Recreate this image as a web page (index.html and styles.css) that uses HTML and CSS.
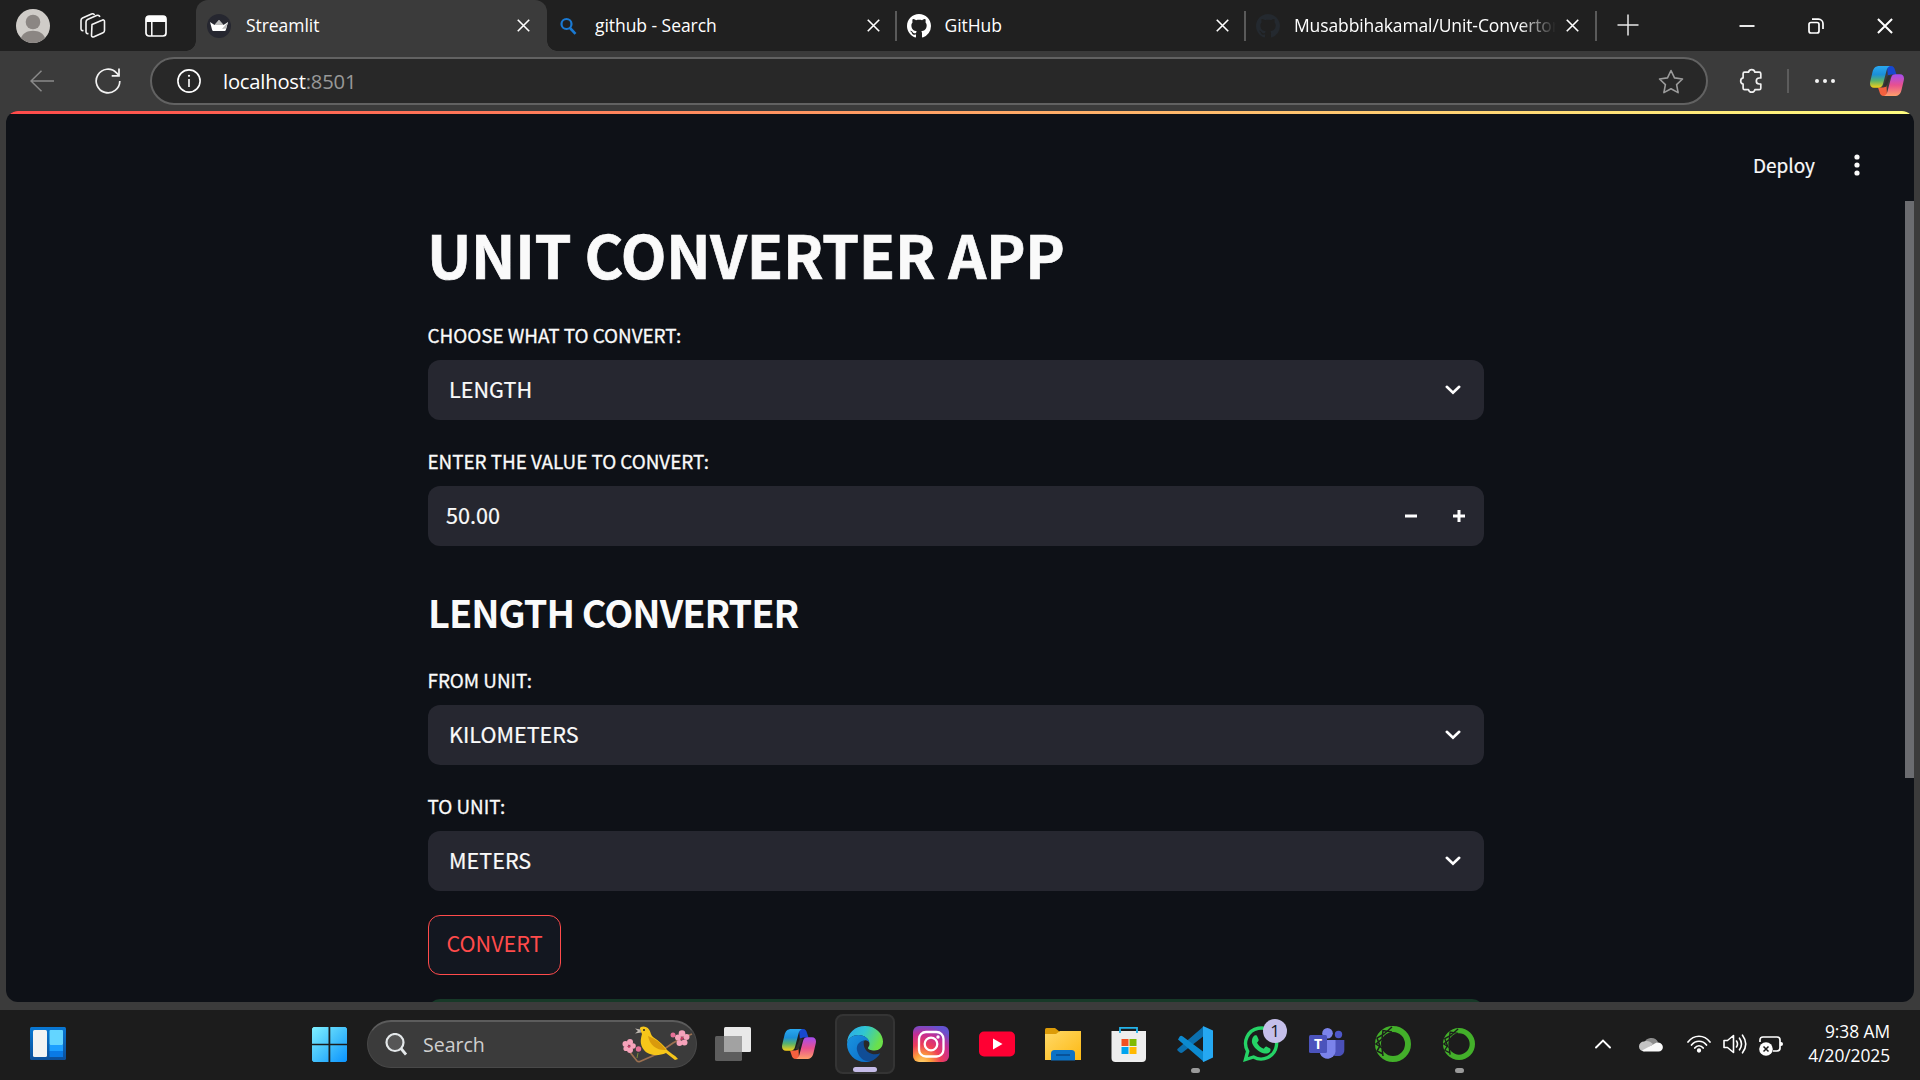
FILE: index.html
```html
<!DOCTYPE html>
<html lang="en">
<head>
<meta charset="utf-8">
<title>Streamlit</title>
<link rel="stylesheet" href="styles.css">
</head>
<body>
<svg class="defs" width="0" height="0" aria-hidden="true">
  <defs>
    <linearGradient id="cpBlue" x1="0" y1="0" x2="0" y2="1"><stop offset="0" stop-color="#2aa8f0"/><stop offset=".4" stop-color="#1b8fd8"/><stop offset=".68" stop-color="#59b26c"/><stop offset="1" stop-color="#f5cf16"/></linearGradient>
    <linearGradient id="cpPink" x1="0" y1="0" x2="0" y2="1"><stop offset="0" stop-color="#a44df0"/><stop offset=".5" stop-color="#e8508f"/><stop offset="1" stop-color="#ffa06a"/></linearGradient>
    <symbol id="copilot" viewBox="0 0 34 30">
      <path d="M17 0h4c2.500 0 3.500 2 4 4l1.500 4.500h-5c-2 0-3 1-3.500 3z" fill="#1748d0"/>
      <path d="M8 21.500h5c2 0 3-1 3.500-3L17 30h-3c-3 0-4-2-4.500-4z" fill="#f4603e"/>
      <path d="M9.500 0H20c-2 .8-2.800 2.500-3.300 4l-3.700 14c-.8 2.700-2 3.700-4.500 3.700H4c-3.300 0-4.500-2.500-3.800-6L2.500 6C3.500 2 5.500 0 9.500 0z" fill="url(#cpBlue)"/>
      <path d="M24.500 30H14c2-.8 2.800-2.500 3.300-4L21 12c.8-2.700 2-3.700 4.500-3.700H30c3.300 0 4.500 2.500 3.800 6L31.500 24c-1 4-3 6-7 6z" fill="url(#cpPink)"/>
      <path d="M19.500 9.500L14.800 20.500" stroke="#303030" stroke-width="2.800"/>
    </symbol>
    <symbol id="close" viewBox="0 0 12 12"><path d="M.7.7l10.600 10.600M11.300.7L.7 11.300" stroke="currentColor" stroke-width="1.500" fill="none"/></symbol>
    <symbol id="github" viewBox="0 0 16 16"><path fill="currentColor" d="M8 0C3.580 0 0 3.580 0 8c0 3.540 2.290 6.530 5.470 7.590.4.070.55-.17.55-.38 0-.19-.01-.82-.01-1.490-2.010.37-2.530-.49-2.690-.94-.09-.23-.48-.94-.82-1.130-.28-.15-.68-.52-.01-.53.63-.01 1.080.58 1.230.82.72 1.210 1.870.87 2.330.66.070-.52.28-.87.51-1.070-1.780-.2-3.640-.89-3.640-3.950 0-.87.31-1.590.82-2.150-.08-.2-.36-1.020.08-2.120 0 0 .67-.21 2.200.82.64-.18 1.320-.27 2-.27s1.360.09 2 .27c1.530-1.040 2.200-.82 2.200-.82.44 1.100.16 1.920.08 2.120.51.56.82 1.270.82 2.150 0 3.070-1.870 3.750-3.650 3.950.29.25.54.73.54 1.480 0 1.070-.01 1.930-.01 2.200 0 .21.150.46.55.38A8.010 8.010 0 0 0 16 8c0-4.420-3.580-8-8-8z"/></symbol>
    <symbol id="chevron" viewBox="0 0 16 10"><path d="M1.800 1.800L8 7.800l6.200-6" fill="none" stroke="#fff" stroke-width="2.600" stroke-linecap="round"/></symbol>
    <symbol id="ring" viewBox="0 0 36 36">
      <circle cx="18" cy="18" r="15" fill="none" stroke="#43b02a" stroke-width="6"/>
      <path d="M17 1L9 8 2 12l3 8-3 5 6 3M17 6L8 4.500 7 13l-6 5 6 4 1 8" fill="none" stroke="#1c1c1c" stroke-width="1.500"/>
    </symbol>
  </defs>
</svg>

<header class="tabstrip">
  <svg class="avatar" viewBox="0 0 34 34"><circle cx="17" cy="17" r="17" fill="#cfccc8"/><circle cx="17" cy="13" r="7.300" fill="#8b8683"/><path d="M5 29C6.500 24.500 11 21.700 17 21.700S27.500 24.500 29 29a17 17 0 0 1-24 0z" fill="#8b8683"/></svg>
  <svg class="workspaces" viewBox="0 0 26 25" fill="none" stroke="#f4f4f4" stroke-width="1.600" stroke-linejoin="round"><path d="M12 11.500l10-4.300c1.500-.7 2.500 0 2.500 1.300v9c0 1-.5 1.800-1.500 2.200l-9 4c-1.300.6-2.500 0-2.500-1.300z"/><path d="M8.500 20.500c-2 .5-2.500-.5-2.500-2V9c0-1.300.5-2 1.500-2.500l9-4c1.500-.6 3-.2 3.300 1.500"/><path d="M3.500 17.500C1.500 18 1 17 1 15.500V7.500C1 6.200 1.500 5.500 2.500 5l9-4c1.500-.5 2.500 0 3 1"/></svg>
  <svg class="vtabs" viewBox="0 0 22 22"><rect x="1" y="1" width="20" height="20" rx="3" fill="none" stroke="#fff" stroke-width="1.700"/><path d="M1 7V4a3 3 0 0 1 3-3h14a3 3 0 0 1 3 3v3z" fill="#fff"/><path d="M6.800 7v14" stroke="#fff" stroke-width="1.500"/></svg>

  <div class="tab tab-active">
    <svg class="favicon" viewBox="0 0 24 24"><circle cx="12" cy="12" r="12" fill="#262730"/><path d="M3 8l4.500 3L12 6l4.500 5L21 8l-2 7.500c-.3 1-.8 1.500-2 1.500H7c-1.200 0-1.700-.5-2-1.500z" fill="#fff"/><path d="M12 6l4.500 5-9 0zM21 8l-6 7 4-.5z" fill="#bbb"/></svg>
    <span class="tab-title">Streamlit</span>
    <svg class="tab-close"><use href="#close"/></svg>
  </div>
  <div class="tab">
    <svg class="favicon favicon-search" viewBox="0 0 24 24" fill="none" stroke="#1a7ad4" stroke-width="2.200"><circle cx="9.500" cy="10" r="5"/><path d="M13 14l5.500 5.800" stroke-width="2.600"/></svg>
    <span class="tab-title">github - Search</span>
    <svg class="tab-close"><use href="#close"/></svg>
  </div>
  <div class="tab tab-divided">
    <svg class="favicon"><use href="#github"/></svg>
    <span class="tab-title">GitHub</span>
    <svg class="tab-close"><use href="#close"/></svg>
  </div>
  <div class="tab tab-divided">
    <svg class="favicon favicon-dim"><use href="#github"/></svg>
    <span class="tab-title tab-title-fade">Musabbihakamal/Unit-Convertor</span>
    <svg class="tab-close"><use href="#close"/></svg>
  </div>
  <div class="newtab"><svg width="22" height="22" viewBox="0 0 22 22"><path d="M11 .5v21M.5 11h21" stroke="#e8e8e8" stroke-width="1.500"/></svg></div>
  <div class="window-controls">
    <svg width="16" height="16" viewBox="0 0 16 16"><path d="M.5 8h15" stroke="#fff" stroke-width="1.800"/></svg>
    <svg width="16" height="16" viewBox="0 0 16 16" fill="none" stroke="#fff" stroke-width="1.700"><rect x="1" y="4.500" width="10" height="10.500" rx="2"/><path d="M4 1.200h6.500a4.500 4.500 0 0 1 4.500 4.500V11"/></svg>
    <svg width="16" height="16"><use href="#close"/></svg>
  </div>
</header>

<nav class="toolbar">
  <svg class="back" viewBox="0 0 24 22" fill="none" stroke="#8a8a8a" stroke-width="1.500"><path d="M24 11H1M11.500.8L1 11l10.500 10.200"/></svg>
  <svg class="reload" viewBox="0 0 26 26" fill="none" stroke="#f2f2f2" stroke-width="1.700"><path d="M24.800 13A11.800 11.800 0 1 1 21.500 4.800L24 7.500"/><path d="M24 .5v7.300h-7.300"/></svg>
  <div class="address">
    <svg class="info" viewBox="0 0 24 24"><circle cx="12" cy="12" r="11.100" fill="none" stroke="#fff" stroke-width="1.600"/><path d="M12 10v8" stroke="#fff" stroke-width="1.600"/><circle cx="12" cy="6.800" r="1.100" fill="#fff"/></svg>
    <span class="url">localhost<span class="port">:8501</span></span>
    <svg class="star" viewBox="0 0 26 25" fill="none" stroke="#9b9b9b" stroke-width="1.600" stroke-linejoin="round"><path d="M13 1.500l3.500 7.400 8 1.100-5.900 5.600 1.500 8L13 19.700l-7.100 3.900 1.500-8L1.500 10l8-1.100z"/></svg>
  </div>
  <svg class="puzzle" viewBox="0 0 24 26" fill="none" stroke="#f0f0f0" stroke-width="1.700" stroke-linejoin="round"><path d="M9.500 4.200a3.300 3.300 0 0 1 6.400 0h4.300c1 0 1.600.5 1.600 1.500v4.300h-1.500a3 3 0 0 0 0 6h1.500v4.200c0 1-.6 1.500-1.600 1.500h-4.300a3.300 3.300 0 0 1-6.400 0H5.600c-1 0-1.500-.5-1.500-1.500v-4.100a3.200 3.200 0 0 1 0-6.200V5.700c0-1 .5-1.500 1.500-1.500z"/></svg>
  <span class="toolbar-sep"></span>
  <svg class="more" viewBox="0 0 22 6" fill="#f4f4f4"><circle cx="3" cy="3" r="2"/><circle cx="11" cy="3" r="2"/><circle cx="19" cy="3" r="2"/></svg>
  <svg class="copilot-btn"><use href="#copilot"/></svg>
</nav>

<main class="page">
  <div class="decoration"></div>
  <div class="app-header">
    <span class="deploy">Deploy</span>
    <svg width="6" height="22" viewBox="0 0 6 22" fill="#fafafa"><circle cx="3" cy="3" r="2.600"/><circle cx="3" cy="11" r="2.600"/><circle cx="3" cy="19" r="2.600"/></svg>
  </div>
  <div class="app-scroll">
    <div class="block">
      <h1>UNIT CONVERTER APP</h1>
      <div class="field">
        <label>CHOOSE WHAT TO CONVERT:</label>
        <div class="control"><span>LENGTH</span><svg class="chev"><use href="#chevron"/></svg></div>
      </div>
      <div class="field">
        <label>ENTER THE VALUE TO CONVERT:</label>
        <div class="control control-number"><span>50.00</span>
          <svg width="12" height="12" viewBox="0 0 12 12"><path d="M0 6h12" stroke="#fff" stroke-width="3"/></svg>
          <svg width="12" height="12" viewBox="0 0 12 12"><path d="M0 6h12M6 0v12" stroke="#fff" stroke-width="3"/></svg>
        </div>
      </div>
      <h2>LENGTH CONVERTER</h2>
      <div class="field">
        <label>FROM UNIT:</label>
        <div class="control"><span>KILOMETERS</span><svg class="chev"><use href="#chevron"/></svg></div>
      </div>
      <div class="field">
        <label>TO UNIT:</label>
        <div class="control"><span>METERS</span><svg class="chev"><use href="#chevron"/></svg></div>
      </div>
      <button class="convert">CONVERT</button>
      <div class="success"></div>
    </div>
    <div class="scrollbar"></div>
  </div>
</main>

<footer class="taskbar">
  <svg class="widgets" viewBox="0 0 36 33"><defs><linearGradient id="wg" x1="0" y1="0" x2="0" y2="1"><stop offset="0" stop-color="#0878d4"/><stop offset="1" stop-color="#0c4f9a"/></linearGradient></defs><rect width="36" height="33" rx="1.500" fill="url(#wg)"/><rect x="3" y="3" width="14" height="27" rx="1.500" fill="#f3f3f3"/><rect x="19.500" y="3" width="13.500" height="15" rx="1" fill="#63d5ff"/><rect x="19.500" y="18" width="13.500" height="6" fill="#1c9fff"/><rect x="19.500" y="24" width="13.500" height="6" fill="#0a7ae6"/></svg>
  <svg class="start" viewBox="0 0 35 35"><defs><linearGradient id="wn" x1="0" y1="0" x2="1" y2="1"><stop offset="0" stop-color="#7ff0ff"/><stop offset=".5" stop-color="#45c2fb"/><stop offset="1" stop-color="#0a93ff"/></linearGradient></defs><path d="M1.500 0h15v16.700H0V1.500zM18.300 0h15.200L35 1.500v15.200H18.300zM0 18.300h16.500V35h-15L0 33.500zM18.300 18.300H35v15.200L33.500 35H18.300z" fill="url(#wn)"/></svg>
  <div class="search">
    <svg class="lens" viewBox="0 0 22 23" fill="none" stroke="#e4e8ea" stroke-width="2.200"><circle cx="10" cy="9.500" r="8.500" fill="#565656"/><path d="M16 15.500l5 6" stroke-width="2.800"/></svg>
    <span>Search</span>
    <svg class="bird" viewBox="0 0 72 38">
      <path d="M8 25l8 10q1 1 3 .5L36 28l16-11 9-5 10-4" fill="none" stroke="#9c7050" stroke-width="1.700"/>
      <path d="M17 27l-1 5" fill="none" stroke="#7b8a3c" stroke-width="1"/>
      <path d="M19 3c-1-2.500 6-4 9 .5 2 3 1.500 5 4 7.500 6 4 11 8 14 13 3 3 8 5 11 9l-3 1-9-7c-9 4-18 2-22-3-5-6-3-12-2-16-.8-2-1.500-3-2-5z" fill="#f6c61a"/>
      <path d="M27 10c8 3 13 7 18 14-9 .5-16-4-18-14z" fill="#d99a0c"/>
      <path d="M19.500 3.500L14 2.500l3 2.500-3 2.500 6-1z" fill="#bdb7b0"/><circle cx="23" cy="4" r="1" fill="#222"/>
      <g fill="#f6a3bb"><circle cx="4.500" cy="18" r="3"/><circle cx="9" cy="16" r="3"/><circle cx="12" cy="20" r="2.800"/><circle cx="9" cy="24" r="3"/><circle cx="5" cy="22.500" r="2.600"/><circle cx="57" cy="11.500" r="3"/><circle cx="61" cy="7.500" r="3.300"/><circle cx="65.500" cy="11" r="3"/><circle cx="63.500" cy="16.500" r="3"/><circle cx="58.500" cy="17" r="3"/></g>
      <g fill="#e66f96"><circle cx="17.500" cy="23" r="2.700"/><circle cx="52" cy="9" r="2.500"/></g>
      <g fill="#c63c68"><circle cx="8" cy="20.500" r="1.200"/><circle cx="61" cy="12.500" r="1.400"/></g>
    </svg>
  </div>
  <div class="apps">
    <div class="app"><svg viewBox="0 0 36 36"><rect y="10" width="27" height="25" rx="1.500" fill="#5d5d5d"/><rect x="9" y="1" width="27" height="25" rx="1.500" fill="#e9e9e9"/><path d="M9 10h18v16H9z" fill="#a2a2a2"/></svg></div>
    <div class="app"><svg class="app-copilot"><use href="#copilot"/></svg></div>
    <div class="app app-current"><svg viewBox="0 0 36 36"><defs><linearGradient id="eg" x1="0" y1="0" x2="1" y2=".35"><stop offset="0" stop-color="#2aa5ee"/><stop offset=".5" stop-color="#30c6d2"/><stop offset="1" stop-color="#6be04a"/></linearGradient><linearGradient id="eb" x1="0" y1="0" x2="1" y2="1"><stop offset="0" stop-color="#1a94e0"/><stop offset="1" stop-color="#0a6cc8"/></linearGradient></defs><path d="M0 18C0 7 8 0 18 0c11 0 18 8 18 15.500 0 6-4 9-8.500 9-4 0-6.500-1.200-6.500-2.500 0-1 1.500-1.800 1.500-4 0-5-5-9-11-9C6 9 1 12 0 18z" fill="url(#eg)"/><path d="M0 18C1 12 6 9 11.500 9c6 0 11 4 11 8-1-2-3-3-5-2.500-4.500 1-6.500 6-3.500 12 2 4 5 6.500 9 9-2 .5-3.500.5-5 .5C8 36 0 28 0 18z" fill="url(#eb)"/><path d="M17 14.500c-6 1-8.500 6-6.500 11.500 2 6 7 10 12.500 9.500 4.500-1.200 8-4.500 10.300-8.300-3 1.300-6 1.300-8.800.5-5-1.500-9-6.500-7.500-13.200z" fill="#104d96"/></svg><i class="ind ind-wide"></i></div>
    <div class="app"><svg viewBox="0 0 36 36"><defs><radialGradient id="ig" cx=".25" cy="1.050" r="1.100"><stop offset="0" stop-color="#ffd776"/><stop offset=".22" stop-color="#fca23c"/><stop offset=".48" stop-color="#ee3e58"/><stop offset=".75" stop-color="#c72d92"/><stop offset="1" stop-color="#6552d0"/></radialGradient></defs><rect width="36" height="36" rx="6" fill="url(#ig)"/><g fill="none" stroke="#fff" stroke-width="2.300"><rect x="6" y="6" width="24.500" height="24.500" rx="7"/><circle cx="18" cy="18" r="6.300"/></g><circle cx="25" cy="11" r="1.700" fill="#fff"/></svg></div>
    <div class="app"><svg viewBox="0 0 36 36"><rect y="5.500" width="36" height="25" rx="5" fill="#ff0033"/><path d="M14 12.500v11l9.500-5.500z" fill="#fff"/></svg></div>
    <div class="app"><svg viewBox="0 0 36 36"><defs><linearGradient id="fg" x1="0" y1="0" x2="1" y2="1"><stop offset="0" stop-color="#ffd968"/><stop offset="1" stop-color="#fdb913"/></linearGradient></defs><path d="M0 3.500Q0 2 1.500 2H10l5 4v4H0z" fill="#dc9b08"/><path d="M0 8h11l4-3h21v29H0z" fill="url(#fg)"/><path d="M6 34.500v-7q0-3.500 3.500-3.500h17q3.500 0 3.500 3.500v7z" fill="#0c72c6"/><path d="M11 29h14" stroke="#084b8f" stroke-width="1.600"/></svg></div>
    <div class="app"><svg viewBox="0 0 36 36"><path d="M9 7V1.800h17V7" fill="none" stroke="#24b4ea" stroke-width="1.800"/><path d="M.5 5H35v27q0 4-4 4H4.500q-4 0-4-4z" fill="#eee"/><path d="M9 7V5M26 7V5" stroke="#24b4ea" stroke-width="1.800"/><path d="M10.500 13h7v7h-7z" fill="#f25022"/><path d="M18.500 13h7v7h-7z" fill="#7fba00"/><path d="M10.500 21h7v7h-7z" fill="#00a4ef"/><path d="M18.500 21h7v7h-7z" fill="#ffb900"/></svg></div>
    <div class="app"><svg viewBox="0 0 36 36"><path d="M1 22.500l25.500-22L28 9 5.500 26.500q-1.500 1-3-.3L.8 24.800q-1.200-1.300.2-2.300z" fill="#0b6fae"/><path d="M1 13.500l1.700-3q1.300-1.300 2.800-.2L28 27l-1.500 8.500L1 13.500q-1-1.500 0 0z" fill="#0c8ad0"/><path d="M26.500.2L36 4.500v27L26.500 35.900q-1 .2-.5-2V2q-.5-2 .5-1.800z" fill="#25a8f2"/></svg><i class="ind"></i></div>
    <div class="app"><svg viewBox="0 0 36 36"><path d="M2.500 33.500l2.200-8.200A15.500 15.500 0 1 1 10.500 31z" fill="none" stroke="#25d366" stroke-width="3.400"/><path d="M11.500 9.500c1.500-.5 2.300-.3 2.800 1l1.300 3c.3 1-.1 1.600-1.600 3.200 1.600 3 3.700 4.700 6.800 6 1.500-1.900 2-2.500 3-2l3.300 1.700c.8.500.6 2.500-.4 3.600-1.500 1.700-4 2-6.500 1.200-5.500-1.800-9.500-6-11-10-.9-3 .6-6.700 2.300-7.700z" fill="#25d366"/></svg><b class="badge">1</b></div>
    <div class="app"><svg viewBox="0 0 36 36"><circle cx="29.500" cy="8.500" r="3.700" fill="#4e57c9"/><path d="M24 14h11.300v10c0 4-3 6-6 6h-4z" fill="#4a50b8"/><circle cx="18.500" cy="7.300" r="5.300" fill="#7b83eb"/><path d="M11 14h15.500v11.500a8 8 0 0 1-15.500 2z" fill="#7b83eb"/><rect y="9" width="18" height="18" rx="1.500" fill="#4b53bc"/><text x="9" y="22.700" text-anchor="middle" class="teams-t">T</text></svg></div>
    <div class="app"><svg><use href="#ring"/></svg></div>
    <div class="app"><svg class="ring-small"><use href="#ring"/></svg><i class="ind"></i></div>
  </div>
  <div class="tray">
    <svg class="t-up" viewBox="0 0 16 10"><path d="M1 8.500L8 1.500l7 7" fill="none" stroke="#fff" stroke-width="1.900" stroke-linecap="round"/></svg>
    <svg class="t-cloud" viewBox="0 0 24 16"><path d="M5 8a7.500 7.500 0 0 1 14 -2l-4 4z" fill="#8d8d8d"/><path d="M5 15.500a5 5 0 0 1 0-10c4-1 6 0 9 2.500l-9 7.500z" fill="#c4c4c4"/><path d="M3 14.500L15 8c2-2 7-2.500 8.500 1.500 1.200 3-.8 6-4 6H5z" fill="#fafafa"/></svg>
    <svg class="t-wifi" viewBox="0 0 24 18" fill="none" stroke="#fff" stroke-width="1.700" stroke-linecap="round"><path d="M1 7C7-.7 17-.7 23 7M4.500 10c4-5 11-5 15 0M7.800 13c2.200-3 6.200-3 8.400 0"/><circle cx="12" cy="15.500" r="1.300" fill="#fff"/></svg>
    <svg class="t-sound" viewBox="0 0 24 20" fill="none" stroke="#fff" stroke-width="1.600" stroke-linecap="round" stroke-linejoin="round"><path d="M1 6.500h3.500L10.500 1.500v17L4.500 13.500H1z"/><path d="M13.500 7q2 3 0 6M16.500 4.200q4 5.800 0 11.600M19.500 1.200q6.500 8.800 0 17.600"/></svg>
    <svg class="t-battery" viewBox="0 0 24 20"><path d="M1 6V4q0-3 3-3h14q3 0 3 3v8q0 3-3 3h-4" fill="none" stroke="#fff" stroke-width="1.700"/><path d="M21 6h1q2 0 2 2t-2 2h-1z" fill="#fff"/><circle cx="7" cy="13" r="6.800" fill="#fff"/><path d="M4.500 10.500l5 5M9.500 10.500l-5 5" stroke="#1c1c1c" stroke-width="1.500"/></svg>
    <div class="clock"><span class="time">9:38 AM</span><span class="date">4/20/2025</span></div>
  </div>
</footer>
</body>
</html>
```
FILE: styles.css
```css
* { box-sizing: border-box; }
body {
  margin: 0;
  width: 1920px;
  height: 1080px;
  overflow: hidden;
  display: flex;
  flex-direction: column;
  background: #3b3b3b;
  color: #fff;
  font-family: "Open Sans", "Noto Sans", sans-serif;
}
svg { display: block; flex: none; }
.defs { position: absolute; }

/* Tab strip */
.tabstrip {
  height: 51px;
  flex: none;
  display: flex;
  align-items: center;
  background: #202020;
  padding-left: 16px;
}
.avatar { width: 34px; height: 34px; }
.workspaces { width: 26px; height: 25px; margin-left: 30px; }
.vtabs { width: 22px; height: 22px; margin: 0 29px 0 39px; }
.tab {
  width: 349.500px;
  height: 51px;
  display: flex;
  align-items: center;
  padding: 0 17px 0 10px;
  position: relative;
}
.tab-active { background: #3b3b3b; border-radius: 12px 12px 0 0; width: 351px; }
.tab-active::before, .tab-active::after {
  content: "";
  position: absolute;
  bottom: 0;
  width: 10px;
  height: 10px;
}
.tab-active::before { left: -10px; background: radial-gradient(circle at 0 0, #202020 9.500px, #3b3b3b 10px); }
.tab-active::after { right: -10px; background: radial-gradient(circle at 100% 0, #202020 9.500px, #3b3b3b 10px); }
.tab-divided::before {
  content: "";
  position: absolute;
  left: -2px;
  top: 11px;
  width: 2px;
  height: 30px;
  background: #5a5a5a;
}
.favicon { width: 24px; height: 24px; margin-right: 14px; }
.tab-active .favicon { margin-left: 1px; margin-right: 15px; }
.favicon-dim { color: #24292f; }
.tab-title { flex: 1; font-size: 17.500px; letter-spacing: -0.05px; white-space: nowrap; overflow: hidden; line-height: 28px; margin-top: -1px; }
.tab-title-fade { letter-spacing: -0.12px; -webkit-mask-image: linear-gradient(90deg, #000 225px, transparent 262px); mask-image: linear-gradient(90deg, #000 225px, transparent 262px); }
.tab-close { width: 13px; height: 13px; margin-left: 6px; }
.newtab { width: 68px; height: 30px; margin-left: -1px; border-left: 2px solid #5a5a5a; display: flex; align-items: center; padding-left: 20px; }
.newtab svg { margin-top: -2px; }
.window-controls { display: flex; gap: 53px; margin-left: auto; padding-right: 27px; }

/* Toolbar */
.toolbar {
  height: 60px;
  flex: none;
  display: flex;
  align-items: center;
  padding: 0 16px 0 30px;
}
.back { width: 24px; height: 22px; }
.reload { width: 26px; height: 26px; margin: 0 29px 0 41px; }
.address {
  width: 1558px;
  height: 48px;
  display: flex;
  align-items: center;
  border: 2px solid #626262;
  border-radius: 24px;
  background: #282828;
  padding: 0 22px 0 25px;
}
.info { width: 24px; height: 24px; }
.url { flex: 1; margin-left: 22px; font-size: 20.200px; letter-spacing: -0.2px; }
.port { color: #989898; }
.star { width: 26px; height: 25px; }
.puzzle { width: 24px; height: 26px; margin-left: 31px; }
.toolbar-sep { width: 2px; height: 24px; background: #5c5c5c; margin: 0 25px 0 24px; }
.more { width: 22px; height: 6px; }
.copilot-btn { width: 34px; height: 30px; margin-left: auto; }

/* App page */
.page {
  width: 1908px;
  height: 891px;
  flex: none;
  margin-left: 6px;
  border-radius: 12px;
  overflow: hidden;
  background: #0e1117;
  color: #fafafa;
  display: flex;
  flex-direction: column;
  font-family: "Noto Sans CJK JP", "Noto Sans CJK SC", sans-serif;
}
.decoration { height: 3px; flex: none; background: linear-gradient(90deg, #ff4b4b, #fffd80); }
.app-header {
  height: 87px;
  flex: none;
  display: flex;
  align-items: center;
  justify-content: flex-end;
  gap: 39px;
  padding: 14px 54px 0 0;
}
.deploy { font-size: 19px; line-height: 30px; -webkit-text-stroke: 0.2px currentColor; }
.app-scroll { flex: 1; display: flex; min-height: 0; position: relative; }
.block {
  width: 1056px;
  margin-left: 422px;
  display: flex;
  flex-direction: column;
}
.block > * { flex: none; }
h1, h2 { margin: 0; font-weight: 700; white-space: nowrap; }
h1 { font-size: 59.400px; line-height: 80px; height: 80px; margin: 12px 0 31px -1px; letter-spacing: -0.33px; -webkit-text-stroke: 0.7px currentColor; }
.field { margin-bottom: 30px; }
label { display: block; height: 39px; margin-top: -3px; margin-left: -0.500px; font-size: 18.900px; line-height: 27px; letter-spacing: -0.04px; -webkit-text-stroke: 0.3px currentColor; }
.control {
  height: 60px;
  display: flex;
  align-items: center;
  padding: 0 23px 0 21px;
  border-radius: 12px;
  background: #262730;
  font-size: 21.600px;
  line-height: 36px;
}
.control span { flex: 1; margin-top: -2px; -webkit-text-stroke: 0.2px currentColor; }
.chev { width: 16px; height: 10px; }
.control-number { padding: 0 19px 0 18px; gap: 36px; }
h2 { font-size: 37.800px; line-height: 60px; height: 60px; margin: 6px 0 27px; letter-spacing: -0.95px; }
.convert {
  width: 133px;
  height: 60px;
  margin-top: -6px;
  border: 1px solid #ff4b4b;
  border-radius: 12px;
  background: #131720;
  color: #ff4b4b;
  font: 400 21.600px/36px "Noto Sans CJK JP", sans-serif;
  padding: 0 0 4px;
  white-space: nowrap;
}
.success { height: 60px; margin-top: 24px; border-radius: 12px; background: #173928; }
.scrollbar { position: absolute; right: 0; top: 0; width: 9px; height: 577px; background: #6b6c70; }

/* Taskbar */
.taskbar {
  height: 70px;
  flex: none;
  margin-top: 8px;
  display: flex;
  align-items: center;
  background: #1c1c1c;
  padding: 0 30px;
}
.widgets { width: 36px; height: 33px; margin-top: -3px; }
.start { width: 35px; height: 35px; margin-left: 246px; margin-top: -1px; }
.search {
  width: 330px;
  height: 48px;
  margin: -2px 0 0 20px;
  display: flex;
  align-items: center;
  border-radius: 24px;
  background: #3b3b3b;
  border: 1px solid #484848;
  border-top: 2px solid #5c5c5c;
  padding: 0 3px 0 17px;
  color: #cfcfcf;
}
.lens { width: 22px; height: 23px; }
.search span { flex: 1; margin-left: 16px; font-size: 19.600px; letter-spacing: -0.05px; }
.bird { width: 72px; height: 38px; }
.apps { display: flex; gap: 6px; margin: -2px 0 0 6px; }
.app {
  width: 60px;
  height: 60px;
  display: grid;
  place-items: center;
  position: relative;
  border-radius: 8px;
}
.app svg { width: 36px; height: 36px; }
.app .app-copilot { width: 34px; height: 30px; }
.app .ring-small { width: 32px; height: 32px; }
.app-current { background: #292929; border: 2px solid #343434; }
.ind { position: absolute; bottom: 1px; left: 50%; width: 9px; height: 5px; margin-left: -4px; border-radius: 3px; background: #9a9a9a; }
.ind-wide { width: 24px; margin-left: -12px; background: #c5bce8; bottom: 0; }
.badge {
  position: absolute;
  left: 32px;
  top: 5px;
  width: 24px;
  height: 24px;
  border-radius: 50%;
  background: #c5bfea;
  color: #1a1a1a;
  font: 400 17px/24px "Open Sans", sans-serif;
  text-align: center;
}
.teams-t { font: 700 14px "Open Sans", sans-serif; fill: #fff; }
.tray { display: flex; align-items: center; margin-left: auto; }
.t-up { width: 16px; height: 10px; margin-right: 28px; margin-top: -3px; }
.t-cloud { width: 24px; height: 16px; margin-right: 24px; margin-top: -2px; }
.t-wifi { width: 24px; height: 18px; margin-right: 12px; margin-top: -3px; }
.t-sound { width: 24px; height: 20px; margin-right: 12px; margin-top: -3px; }
.t-battery { width: 24px; height: 20px; margin-top: 2px; }
.clock { width: 107px; display: flex; flex-direction: column; align-items: flex-end; font-size: 17.400px; line-height: 24px; letter-spacing: -0.08px; margin-top: -5px; }
```
